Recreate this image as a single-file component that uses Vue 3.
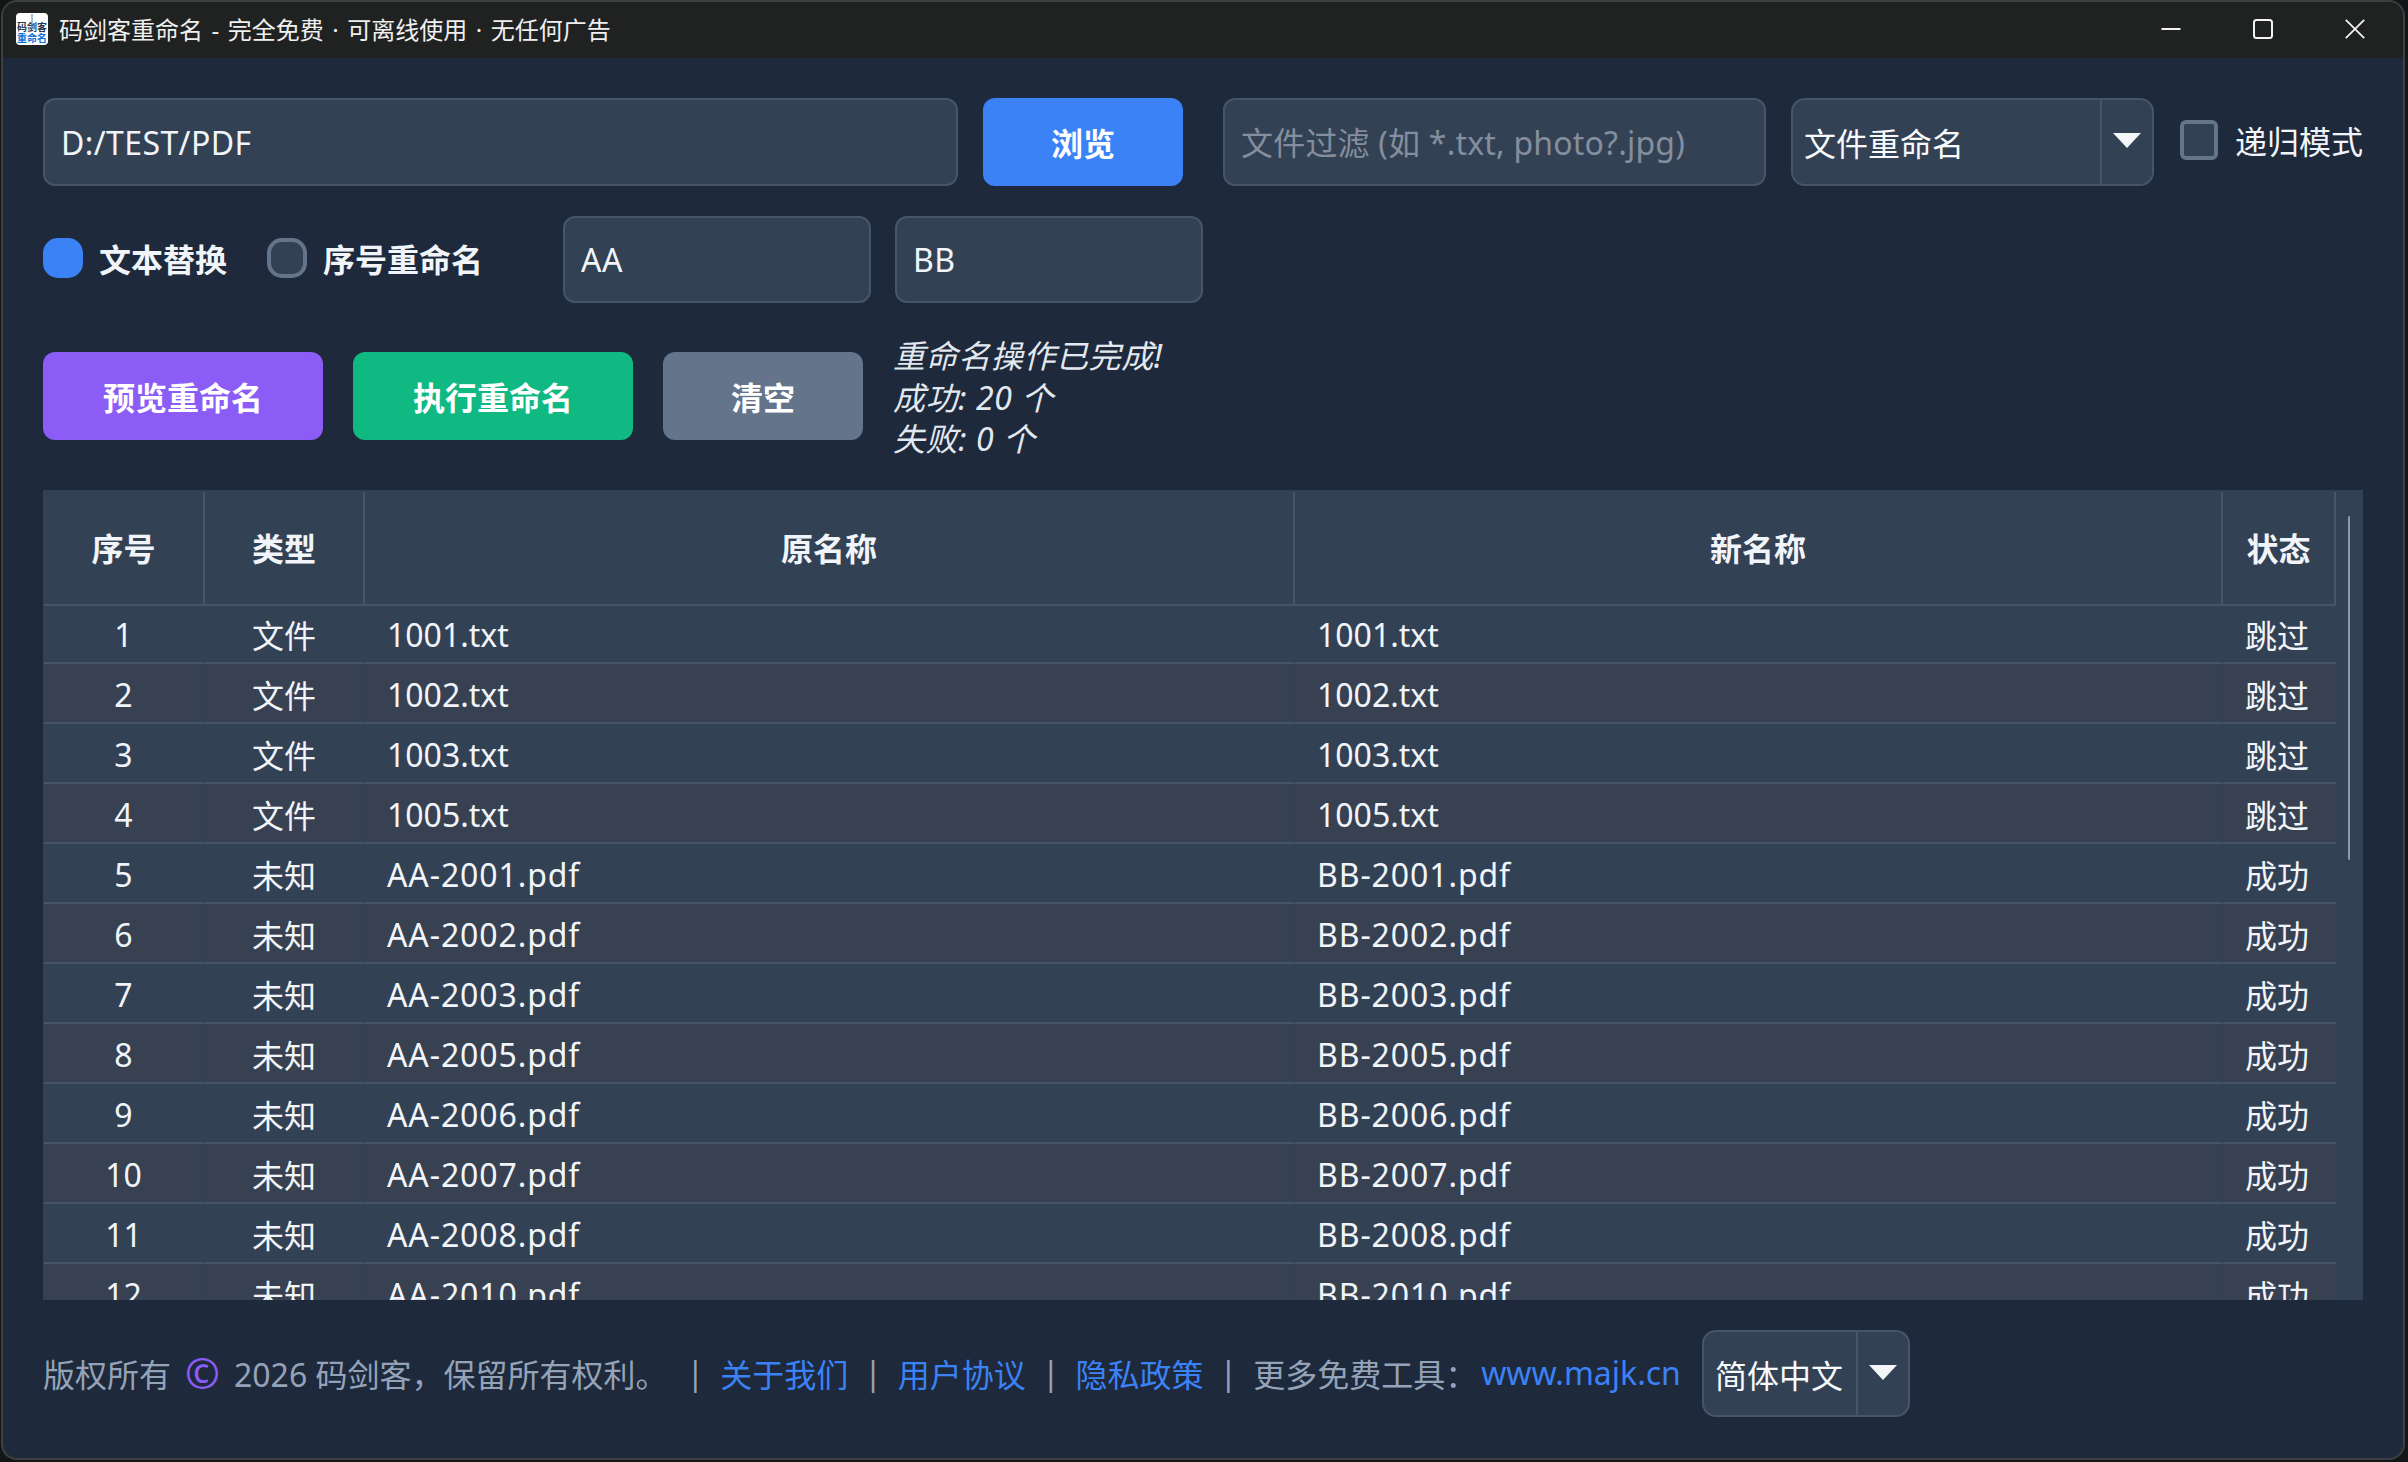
<script setup>
import { ref } from 'vue';

const pathText = ref('D:/TEST/PDF');
const filterText = ref('');
const findText = ref('AA');
const replaceText = ref('BB');

const links = ['关于我们', '用户协议', '隐私政策'];

const rows = [
  { id: 1, type: '文件', from: '1001.txt', to: '1001.txt', state: '跳过' },
  { id: 2, type: '文件', from: '1002.txt', to: '1002.txt', state: '跳过' },
  { id: 3, type: '文件', from: '1003.txt', to: '1003.txt', state: '跳过' },
  { id: 4, type: '文件', from: '1005.txt', to: '1005.txt', state: '跳过' },
  { id: 5, type: '未知', from: 'AA-2001.pdf', to: 'BB-2001.pdf', state: '成功' },
  { id: 6, type: '未知', from: 'AA-2002.pdf', to: 'BB-2002.pdf', state: '成功' },
  { id: 7, type: '未知', from: 'AA-2003.pdf', to: 'BB-2003.pdf', state: '成功' },
  { id: 8, type: '未知', from: 'AA-2005.pdf', to: 'BB-2005.pdf', state: '成功' },
  { id: 9, type: '未知', from: 'AA-2006.pdf', to: 'BB-2006.pdf', state: '成功' },
  { id: 10, type: '未知', from: 'AA-2007.pdf', to: 'BB-2007.pdf', state: '成功' },
  { id: 11, type: '未知', from: 'AA-2008.pdf', to: 'BB-2008.pdf', state: '成功' },
  { id: 12, type: '未知', from: 'AA-2010.pdf', to: 'BB-2010.pdf', state: '成功' },
];
</script>

<template>
  <div class="page">
    <div class="window">
      <header class="titlebar">
        <div class="app-icon">
          <svg class="sword" width="2" height="14" viewBox="0 0 2 14"><path d="M1 0V14" stroke="#3b82c4" stroke-width="1" /></svg>
          <span class="icon-top">码剑客</span>
          <span class="icon-bottom">重命名</span>
        </div>
        <span class="title">码剑客重命名 - 完全免费 · 可离线使用 · 无任何广告</span>
        <div class="win-controls">
          <button class="win-btn">
            <svg width="20" height="20" viewBox="0 0 20 20"><path d="M0.5 10H19.5" stroke="#f2f2f2" stroke-width="2" /></svg>
          </button>
          <button class="win-btn">
            <svg width="20" height="20" viewBox="0 0 20 20"><rect x="1" y="1" width="18" height="18" rx="2.5" fill="none" stroke="#f2f2f2" stroke-width="2" /></svg>
          </button>
          <button class="win-btn">
            <svg width="20" height="20" viewBox="0 0 20 20"><path d="M0.8 0.8L19.2 19.2M19.2 0.8L0.8 19.2" stroke="#f2f2f2" stroke-width="1.8" /></svg>
          </button>
        </div>
      </header>

      <main class="content">
        <section class="row row-top">
          <input v-model="pathText" class="field field-path" />
          <button class="btn btn-blue btn-browse">浏览</button>
          <input v-model="filterText" class="field field-filter" placeholder="文件过滤 (如 *.txt, photo?.jpg)" />
          <div class="combo combo-mode">
            <span class="combo-text">文件重命名</span>
            <span class="combo-arrow">
              <svg width="28" height="16" viewBox="0 0 28 16"><polygon points="0,1 28,1 14,16" fill="#f4f6f8" /></svg>
            </span>
          </div>
          <label class="check">
            <span class="check-box"></span>
            <span>递归模式</span>
          </label>
        </section>

        <section class="row row-mode">
          <div class="radio on"><span class="radio-dot"></span><b>文本替换</b></div>
          <div class="radio"><span class="radio-dot"></span><b>序号重命名</b></div>
          <input v-model="findText" class="field field-short field-find" />
          <input v-model="replaceText" class="field field-short" />
        </section>

        <section class="row row-actions">
          <button class="btn btn-purple btn-wide">预览重命名</button>
          <button class="btn btn-green btn-wide">执行重命名</button>
          <button class="btn btn-gray btn-browse">清空</button>
          <p class="status">重命名操作已完成!<br />成功: 20 个<br />失败: 0 个</p>
        </section>

        <section class="table-box">
          <table class="result-table">
            <colgroup>
              <col class="col-id" />
              <col class="col-type" />
              <col class="col-name" />
              <col class="col-new" />
              <col class="col-state" />
            </colgroup>
            <thead>
              <tr>
                <th>序号</th>
                <th>类型</th>
                <th>原名称</th>
                <th>新名称</th>
                <th>状态</th>
              </tr>
            </thead>
            <tbody>
              <tr v-for="row in rows" :key="row.id">
                <td class="center">{{ row.id }}</td>
                <td class="center">{{ row.type }}</td>
                <td :class="{ pdf: row.from.endsWith('.pdf') }">{{ row.from }}</td>
                <td :class="{ pdf: row.to.endsWith('.pdf') }">{{ row.to }}</td>
                <td>{{ row.state }}</td>
              </tr>
            </tbody>
          </table>
          <div class="scroll-thumb"></div>
        </section>

        <footer class="footer">
          <span>版权所有</span>
          <span class="copy">©</span>
          <span class="owner">2026 码剑客，保留所有权利。</span>
          <template v-for="link in links" :key="link">
            <span>|</span>
            <a href="#" class="link">{{ link }}</a>
          </template>
          <span>|</span>
          <span>更多免费工具：</span>
          <a href="#" class="link link-site">www.majk.cn</a>
          <div class="combo combo-lang">
            <span class="combo-text">简体中文</span>
            <span class="combo-arrow">
              <svg width="28" height="16" viewBox="0 0 28 16"><polygon points="0,1 28,1 14,16" fill="#f4f6f8" /></svg>
            </span>
          </div>
        </footer>
      </main>
    </div>
  </div>
</template>

<style>
html, body { margin: 0; background: #141516; overflow: hidden; }
</style>

<style scoped>
.page {
  width: 2408px;
  height: 1462px;
  box-sizing: border-box;
  padding: 0 3px 2px 1px;
  font-family: "Noto Sans", "Noto Sans CJK SC", sans-serif;
  font-size: 32px;
  color: #f1f5f9;
}
.window {
  height: 100%;
  box-sizing: border-box;
  display: flex;
  flex-direction: column;
  border: 2px solid #3d3f40;
  border-radius: 16px;
  overflow: hidden;
  background: #1e293b;
}

/* title bar */
.titlebar {
  height: 56px;
  flex: none;
  display: flex;
  align-items: center;
  padding: 0 2px 0 13px;
  background: #202221;
}
.app-icon {
  position: relative;
  width: 32px;
  height: 32px;
  margin-right: 11px;
  margin-bottom: 3px;
  background: #fff;
  border-radius: 4px;
  display: flex;
  flex-direction: column;
  align-items: center;
  justify-content: flex-end;
  padding-bottom: 2px;
  box-sizing: border-box;
  font-family: "Noto Sans CJK SC", sans-serif;
  font-size: 10px;
  font-weight: 700;
  line-height: 11px;
  overflow: hidden;
}
.sword { position: absolute; top: 1px; left: 15px; }
.icon-top { color: #29384a; white-space: nowrap; }
.icon-bottom { color: #0d6fd8; white-space: nowrap; }
.title { font-size: 24px; color: #f0f0f0; margin-bottom: 4px; word-spacing: 2.3px; }
.win-controls { margin-left: auto; display: flex; }
.win-btn {
  width: 92px;
  height: 54px;
  padding: 0;
  border: 0;
  background: transparent;
  display: flex;
  align-items: center;
  justify-content: center;
  margin-bottom: 2px;
}

/* main area */
.content {
  flex: 1;
  min-height: 0;
  display: flex;
  flex-direction: column;
  padding: 40px 40px 41px;
}
.row { display: flex; align-items: center; flex: none; }
.row-top { height: 88px; gap: 25px; }
.row-mode { height: 87px; margin-top: 30px; }
.row-actions { height: 125px; margin-top: 32px; gap: 30px; }

.field {
  height: 100%;
  box-sizing: border-box;
  padding: 0 16px;
  border: 2px solid #475569;
  border-radius: 12px;
  background: #334155;
  color: #f1f5f9;
  font: inherit;
  letter-spacing: 0.4px;
  outline: none;
}
.field::placeholder { color: #858e9c; opacity: 1; letter-spacing: 0.2px; }
.field-path { width: 915px; }
.field-filter { width: 543px; margin-left: 15px; }
.field-short { width: 308px; }
.field-find { margin-left: 80px; margin-right: 24px; }

.btn {
  height: 88px;
  padding: 0;
  border: 0;
  border-radius: 12px;
  color: #fff;
  font: inherit;
  font-weight: 700;
}
.btn-browse { width: 200px; }
.btn-wide { width: 280px; }
.row-actions .btn { margin-bottom: 3px; }
.btn-blue { background: #3b82f6; }
.btn-purple { background: #8b5cf6; }
.btn-green { background: #10b981; }
.btn-gray { background: #64748b; }

.combo {
  height: 88px;
  box-sizing: border-box;
  display: flex;
  border: 2px solid #475569;
  border-radius: 14px;
  background: #334155;
  flex: none;
}
.combo-text { flex: 1; padding-left: 11px; align-self: center; color: #f8fafc; }
.combo-arrow {
  width: 52px;
  display: flex;
  align-items: center;
  justify-content: center;
  border-left: 2px solid #475569;
  box-sizing: border-box;
  padding-bottom: 4px;
}
.combo-mode { width: 363px; }
.combo-lang { width: 208px; height: 87px; margin: 0 0 -2px 5px; }

.check {
  display: flex;
  align-items: center;
  gap: 17px;
  margin: 0 0 4px 1px;
  white-space: nowrap;
}
.check-box {
  width: 38px;
  height: 40px;
  box-sizing: border-box;
  border: 4px solid #64748b;
  border-radius: 6px;
  background: #334155;
}

.radio { display: flex; align-items: center; gap: 16px; margin: 0 40px 3px 0; }
.radio:nth-child(2) { margin-right: 0; }
.radio b { font-weight: 700; }
.radio-dot {
  width: 40px;
  height: 40px;
  box-sizing: border-box;
  border: 4px solid #64748b;
  border-radius: 15px;
  background: #334155;
}
.radio.on .radio-dot { border-color: #3b82f6; background: #3b82f6; }

.status {
  margin: 0;
  font-style: italic;
  line-height: 41.5px;
  letter-spacing: 0.6px;
  color: #e2e8f0;
}

/* table */
.table-box {
  position: relative;
  flex: 1;
  min-height: 0;
  margin-top: 30px;
  padding: 2px 0 0 1px;
  overflow: hidden;
  background: #334155;
  box-sizing: border-box;
}
.result-table {
  width: 2292px;
  table-layout: fixed;
  border-collapse: separate;
  border-spacing: 0;
}
.col-id { width: 161px; }
.col-type { width: 160px; }
.col-name { width: 930px; }
.col-new { width: 928px; }
.col-state { width: 113px; }
th {
  height: 114px;
  box-sizing: border-box;
  padding: 0 0 2px;
  font-weight: 700;
  border-right: 2px solid #475569;
  border-bottom: 2px solid #475569;
}
td {
  height: 60px;
  box-sizing: border-box;
  padding: 2px 0 0 22px;
  white-space: nowrap;
  border-right: 2px solid #334155;
  border-bottom: 2px solid #475569;
}
td:last-child { border-right: 0; }
td.center { padding-left: 0; text-align: center; }
td.pdf { letter-spacing: 0.9px; }
tbody tr:first-child td { height: 58px; padding-top: 0; }
tbody tr:nth-child(even) td { background: #374151; }
.scroll-thumb {
  position: absolute;
  top: 26px;
  right: 13px;
  width: 2px;
  height: 344px;
  background: #8f98a5;
  border-radius: 1px;
}

/* footer */
.footer {
  height: 85px;
  padding-bottom: 2px;
  flex: none;
  margin-top: 30px;
  display: flex;
  align-items: center;
  gap: 16px;
  color: #94a3b8;
}
.copy {
  width: 31px;
  margin-left: -2px;
  margin-right: 2px;
  text-align: center;
  color: #8b5cf6;
  font-size: 42px;
  line-height: 1;
}
.link { color: #3b82f6; text-decoration: none; }
.owner { margin-right: 3px; }
.link-site { margin-left: -12px; }
</style>
